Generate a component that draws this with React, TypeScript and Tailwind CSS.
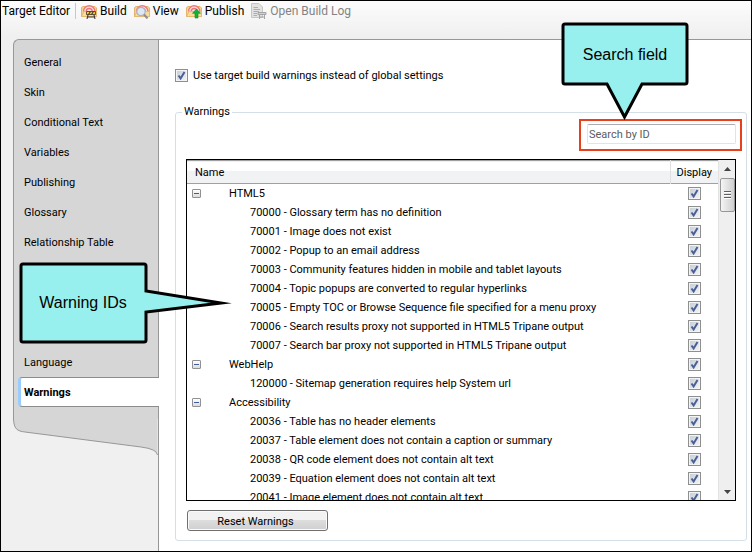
import React from 'react';

type Group = { name: string; items: string[] };

const groups: Group[] = [
  {
    name: 'HTML5',
    items: [
      '70000 - Glossary term has no definition',
      '70001 - Image does not exist',
      '70002 - Popup to an email address',
      '70003 - Community features hidden in mobile and tablet layouts',
      '70004 - Topic popups are converted to regular hyperlinks',
      '70005 - Empty TOC or Browse Sequence file specified for a menu proxy',
      '70006 - Search results proxy not supported in HTML5 Tripane output',
      '70007 - Search bar proxy not supported in HTML5 Tripane output',
    ],
  },
  { name: 'WebHelp', items: ['120000 - Sitemap generation requires help System url'] },
  {
    name: 'Accessibility',
    items: [
      '20036 - Table has no header elements',
      '20037 - Table element does not contain a caption or summary',
      '20038 - QR code element does not contain alt text',
      '20039 - Equation element does not contain alt text',
      '20041 - Image element does not contain alt text',
    ],
  },
];

const sections = ['General', 'Skin', 'Conditional Text', 'Variables', 'Publishing', 'Glossary', 'Relationship Table'];

function Check({ id, label }: { id?: string; label?: string }) {
  return (
    <span className="relative block h-[13px] w-[13px] shrink-0">
      <input
        id={id}
        type="checkbox"
        defaultChecked
        aria-label={label}
        className="peer block h-[13px] w-[13px] appearance-none border border-[#8e8f8f] bg-linear-to-br from-[#c4cbd3] to-[#f6f6f6] shadow-[inset_0_0_0_1px_#f4f4f4]"
      />
      <svg viewBox="0 0 13 13" className="pointer-events-none absolute inset-0 hidden h-[13px] w-[13px] peer-checked:block">
        <path d="M3.5 6.5 L5.6 9.4 L9.5 3" fill="none" stroke="#4a5f97" strokeWidth="2" />
      </svg>
    </span>
  );
}

function TargetBase() {
  return (
    <>
      <path d="M0.5 4.5 L2 3.5 H14 L15.5 5 V13.5 H0.5 Z" fill="#f5d58f" stroke="#e3b56c" />
      <path d="M2.5 8.5 A5.7 5.7 0 0 1 13.9 8.5" fill="#fbe3e3" stroke="#f0757a" strokeWidth="1.4" />
      <path d="M5.2 8.5 A3 3 0 0 1 11.2 8.5" fill="none" stroke="#f0757a" strokeWidth="1.4" />
      <path d="M0.5 13.5 L3 8.5 H15.5 V13.5 Z" fill="#f8dc9c" stroke="#e3b56c" strokeWidth="0.8" />
    </>
  );
}

function BuildIcon() {
  return (
    <svg viewBox="0 0 16 16" className="h-4 w-4">
      <TargetBase />
      <path d="M5.5 8.5 H14.5 V11.5 H5.5 Z" fill="#f6c93c" stroke="#3a3420" strokeWidth="0.8" />
      <path d="M7.5 11.5 L9.5 8.5 M10.5 11.5 L12.5 8.5 M7 12 L6 16 M13 12 L14 16 M6.5 14 H13.5" stroke="#3a3a3a" strokeWidth="1.1" />
    </svg>
  );
}

function ViewIcon() {
  return (
    <svg viewBox="0 0 16 16" className="h-4 w-4">
      <TargetBase />
      <circle cx="7" cy="8.5" r="4.2" fill="#dce9f5" stroke="#a9b4c4" strokeWidth="1.2" />
      <path d="M10 11.5 L13.5 15.5" stroke="#8c8c94" strokeWidth="2" />
    </svg>
  );
}

function PublishIcon() {
  return (
    <svg viewBox="0 0 16 16" className="h-4 w-4">
      <TargetBase />
      <path d="M10.5 6 L14.5 10.3 H12 V15 H9 V10.3 H6.5 Z" fill="#12b436" stroke="#0c8a28" strokeWidth="0.6" />
    </svg>
  );
}

function LogIcon() {
  return (
    <svg viewBox="0 0 16 16" className="h-4 w-4">
      <path d="M0.5 0.5 H8 L11.5 4 V14.5 H0.5 Z" fill="#e2e2e2" stroke="#c6c6c6" />
      <path d="M2.5 4.5 H7 M2.5 6.5 H9 M2.5 8.5 H8 M2.5 10.5 H6 M2.5 12.5 H6" stroke="#adadad" />
      <path d="M7 9.5 H15 V11.5 H7 Z" fill="#d0d0d0" stroke="#a4a4a4" />
      <path d="M8.5 12 V16 M13.5 12 V16 M8 14 H14" stroke="#a4a4a4" />
    </svg>
  );
}

function Tool({ icon, children, disabled }: { icon: React.ReactNode; children: string; disabled?: boolean }) {
  return (
    <button type="button" disabled={disabled} className="flex items-center gap-[3px] whitespace-nowrap disabled:text-[#838383]">
      {icon}
      {children}
    </button>
  );
}

function Row({ name, group }: { name: string; group?: boolean }) {
  return (
    <tr className="h-[19px]">
      <td className="p-0">
        {group ? (
          <div className="flex items-center gap-7 pl-[5px]">
            <button
              type="button"
              aria-label={`Collapse ${name}`}
              className="flex h-[9px] w-[9px] items-center justify-center rounded-[1px] border border-[#919191] bg-linear-to-b from-white to-[#dcdcdc]"
            >
              <span className="h-px w-[5px] bg-[#3f5aa6]" />
            </button>
            <span className="pt-0.5">{name}</span>
          </div>
        ) : (
          <div className="pt-0.5 pl-[63px]">{name}</div>
        )}
      </td>
      <td className="p-0">
        <div className="flex justify-center">
          <Check label={`Display ${name}`} />
        </div>
      </td>
    </tr>
  );
}

export default function App() {
  return (
    <div className="relative flex h-screen flex-col overflow-hidden border border-black bg-[#f0f0f0] font-[Roboto,sans-serif] text-[11px] leading-4 text-black">
      <header className="flex h-[38px] shrink-0 items-start bg-linear-to-b from-[#fcfcfc] to-[#efefef] pl-px text-xs leading-5">
        <span className="whitespace-nowrap">Target Editor</span>
        <span className="mx-[5px] mt-0.5 h-4 w-px bg-[#c8c8c8]" />
        <div className="flex gap-[7px]">
          <Tool icon={<BuildIcon />}>Build</Tool>
          <Tool icon={<ViewIcon />}>View</Tool>
          <Tool icon={<PublishIcon />}>Publish</Tool>
          <Tool icon={<LogIcon />} disabled>
            Open Build Log
          </Tool>
        </div>
      </header>

      <div className="flex min-h-0 flex-1">
        <nav aria-label="Target settings" className="ml-3 flex w-[145px] shrink-0 flex-col">
          <div className="flex h-[380px] flex-col rounded-tl-md border-t border-l border-[#979797] bg-[#d6d6d6] pt-[7px]">
            {sections.map((s) => (
              <a key={s} href="#" className="flex h-[30px] items-center pt-0.5 pl-2.5">
                {s}
              </a>
            ))}
            <a href="#" className="mt-[90px] flex h-[30px] items-center pt-0.5 pl-2.5">
              Language
            </a>
            <a
              href="#"
              aria-current="page"
              className="relative -mr-px ml-1 flex h-[30px] items-center rounded-l-sm border-y border-l-3 border-y-[#8c8c8c] border-l-[#99ccff] bg-white pt-0.5 pl-[3px] font-bold"
            >
              Warnings
            </a>
          </div>
          <svg viewBox="0 0 145 40" preserveAspectRatio="none" className="h-10 w-full">
            <path d="M0.5 0 C1 10 4 12 12 13 L128 28 Q144 30 144.5 36 V0 Z" fill="#d6d6d6" />
            <path d="M0.5 0 C1 10 4 12 12 13 L128 28 Q144 30 144.5 36" fill="none" stroke="#979797" />
          </svg>
        </nav>

        <main className="flex min-w-0 flex-1 flex-col border-t border-l border-[#979797] bg-white pr-1 pl-4">
          <div className="mt-[27px] flex h-4 items-center gap-[5px]">
            <Check id="use-target" />
            <label htmlFor="use-target" className="pt-0.5">
              Use target build warnings instead of global settings
            </label>
          </div>

          <fieldset className="mt-[22px] flex min-w-0 flex-col rounded-[3px] border border-[#d5dfe8] px-[10px] pb-[9px]">
            <legend className="-ml-1 px-0.5 leading-[14px]">Warnings</legend>
            <div className="-mr-[6px] flex w-[163px] self-end border-2 border-[#e8401c] pt-[3px] pr-1 pb-[5px] pl-[6px]">
              <input
                type="text"
                aria-label="Search by ID"
                placeholder="Search by ID"
                className="h-5 w-full rounded-[2px] border border-[#dfe3ea] border-t-[#abadb3] bg-white px-px placeholder:text-[#5c5c5c]"
              />
            </div>

            <div className="mt-2 flex h-[342px] border border-black">
              <div className="min-w-0 flex-1 overflow-hidden">
                <table className="w-full table-fixed border-collapse">
                  <thead>
                    <tr className="h-[23px] border-y border-[#a0a0a0] bg-linear-to-b from-white from-40% to-[#f1f2f4] to-45%">
                      <th className="p-0 pt-0.5 pl-2 text-left font-normal">Name</th>
                      <th className="w-12 border-l border-l-[#dfe0e2] p-0 pt-0.5 text-center font-normal">Display</th>
                    </tr>
                  </thead>
                  <tbody>
                    {groups.map((g) => (
                      <React.Fragment key={g.name}>
                        <Row name={g.name} group />
                        {g.items.map((i) => (
                          <Row key={i} name={i} />
                        ))}
                      </React.Fragment>
                    ))}
                  </tbody>
                </table>
              </div>
              <div className="flex w-[17px] flex-col items-center border-l border-[#e3e3e3] bg-[#efefef]">
                <button type="button" aria-label="Scroll up" className="flex h-[18px] w-full items-center justify-center">
                  <svg viewBox="0 0 7 4" className="h-1 w-[7px]">
                    <path d="M0 4 L3.5 0 L7 4 Z" fill="#444" />
                  </svg>
                </button>
                <div className="flex h-[34px] w-[15px] flex-col items-center justify-center gap-px rounded-[2px] border border-[#979797] bg-linear-to-r from-[#f5f5f5] to-[#cfcfcf]">
                  <span className="h-0.5 w-[7px] border-t border-[#606060] bg-white" />
                  <span className="h-0.5 w-[7px] border-t border-[#606060] bg-white" />
                  <span className="h-0.5 w-[7px] border-t border-[#606060] bg-white" />
                </div>
                <button type="button" aria-label="Scroll down" className="mt-auto flex h-[17px] w-full items-center justify-center">
                  <svg viewBox="0 0 7 4" className="h-1 w-[7px]">
                    <path d="M0 0 L3.5 4 L7 0 Z" fill="#444" />
                  </svg>
                </button>
              </div>
            </div>

            <button
              type="button"
              className="mt-[9px] ml-px h-[21px] w-[141px] rounded-[3px] border border-[#707070] bg-linear-to-b from-[#f2f2f2] from-45% via-[#dddddd] via-50% to-[#cfcfcf] pt-0.5 pr-1 shadow-[inset_0_0_0_1px_#fafafa]"
            >
              Reset Warnings
            </button>
          </fieldset>
        </main>
      </div>

      <div className="absolute top-[21px] right-[62px] h-[98px] w-32 font-['Liberation_Sans',sans-serif] text-base">
        <svg viewBox="0 0 128 98" className="absolute inset-0 h-full w-full">
          <path
            d="M4 2 H124 Q126 2 126 4 V60 Q126 62 124 62 H81 L63.5 95 L46 62 H4 Q2 62 2 60 V4 Q2 2 4 2 Z"
            fill="#97f0ed"
            stroke="#000"
            strokeWidth="3"
          />
        </svg>
        <p className="relative flex h-16 items-center justify-center pt-0.5">Search field</p>
      </div>

      <div className="absolute top-[261px] left-[18px] h-[82px] w-[216px] font-['Liberation_Sans',sans-serif] text-base">
        <svg viewBox="0 0 216 82" className="absolute inset-0 h-full w-full">
          <path
            d="M4 2 H125 Q127 2 127 4 V29 L202 41 L127 50 V78 Q127 80 125 80 H4 Q2 80 2 78 V4 Q2 2 4 2 Z"
            fill="#97f0ed"
            stroke="#000"
            strokeWidth="3"
            strokeMiterlimit="12"
          />
        </svg>
        <p className="relative flex h-20 w-32 items-center justify-center pt-0.5">Warning IDs</p>
      </div>
    </div>
  );
}
